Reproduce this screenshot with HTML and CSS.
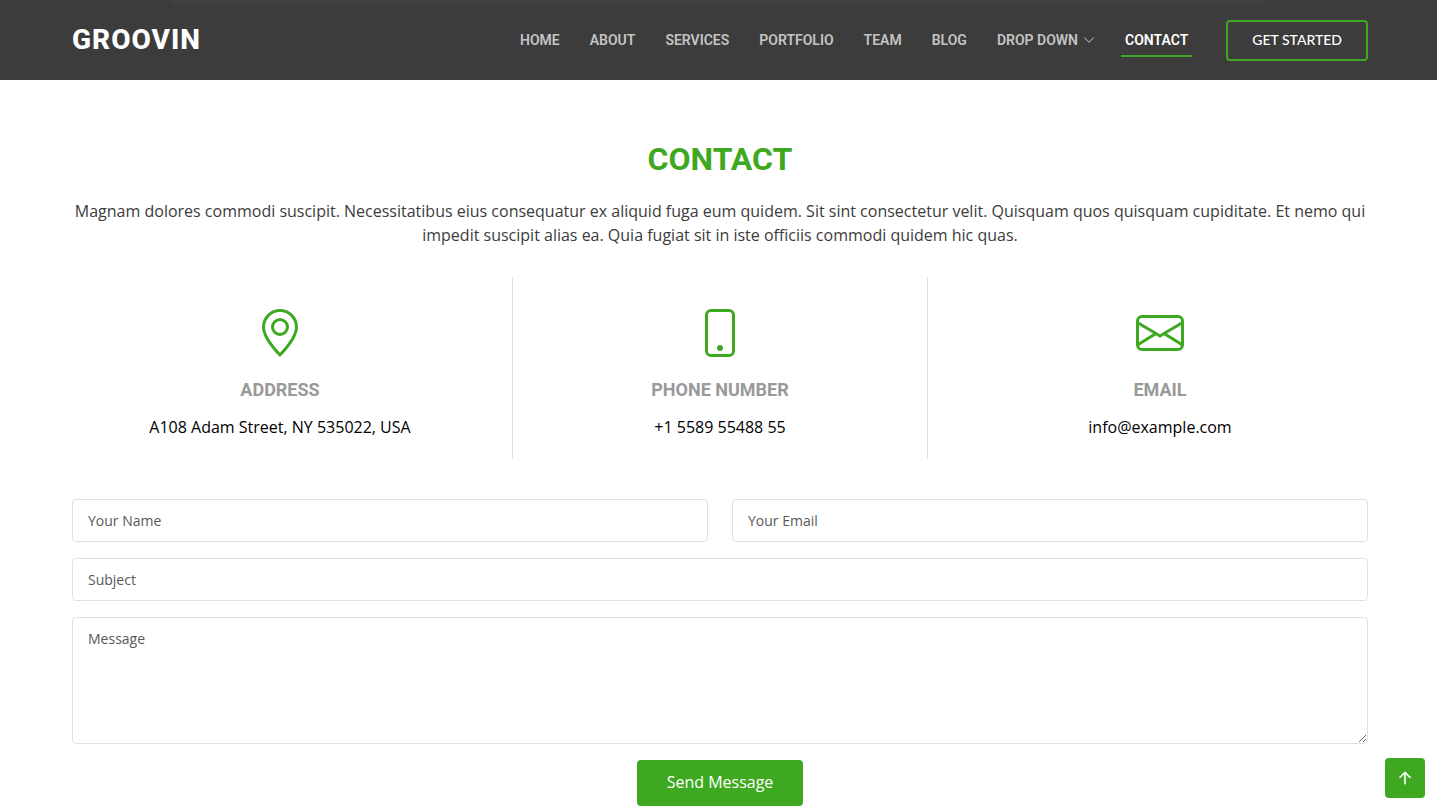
FILE: index.html
```
<!DOCTYPE html>
<html lang="en">
<head>
    <meta charset="UTF-8">
    <meta name="viewport" content="width=device-width, initial-scale=1.0">
    <title>Groovin - Contact</title>
    <link rel="stylesheet" href="styles.css">
</head>
<body>
    <header class="header">
        <div class="container header-row">
            <a class="logo" href="#">GROOVIN</a>
            <nav class="navbar">
                <a href="#">Home</a>
                <a href="#">About</a>
                <a href="#">Services</a>
                <a href="#">Portfolio</a>
                <a href="#">Team</a>
                <a href="#">Blog</a>
                <a href="#">Drop Down
                    <svg class="chevron" viewBox="0 0 16 16" fill="currentColor"><path fill-rule="evenodd" d="M1.646 4.646a.5.5 0 0 1 .708 0L8 10.293l5.646-5.647a.5.5 0 0 1 .708.708l-6 6a.5.5 0 0 1-.708 0l-6-6a.5.5 0 0 1 0-.708z"/></svg>
                </a>
                <a class="active" href="#contact">Contact</a>
            </nav>
            <a class="get-started" href="#">GET STARTED</a>
        </div>
    </header>

    <main>
        <section id="contact" class="contact">
            <div class="container">
                <div class="section-title">
                    <h2>Contact</h2>
                    <p>Magnam dolores commodi suscipit. Necessitatibus eius consequatur ex aliquid fuga eum quidem. Sit sint consectetur velit. Quisquam quos quisquam cupiditate. Et nemo qui impedit suscipit alias ea. Quia fugiat sit in iste officiis commodi quidem hic quas.</p>
                </div>

                <div class="contact-info">
                    <div class="info-box">
                        <svg viewBox="0 0 16 16" fill="currentColor"><path d="M12.166 8.94c-.524 1.062-1.234 2.12-1.96 3.07A31.493 31.493 0 0 1 8 14.58a31.481 31.481 0 0 1-2.206-2.57c-.726-.95-1.436-2.008-1.96-3.07C3.304 7.867 3 6.862 3 6a5 5 0 0 1 10 0c0 .862-.305 1.867-.834 2.94zM8 16s6-5.686 6-10A6 6 0 0 0 2 6c0 4.314 6 10 6 10z"/><path d="M8 8a2 2 0 1 1 0-4 2 2 0 0 1 0 4zm0 1a3 3 0 1 0 0-6 3 3 0 0 0 0 6z"/></svg>
                        <h3>Address</h3>
                        <address>A108 Adam Street, NY 535022, USA</address>
                    </div>
                    <div class="info-box info-phone">
                        <svg viewBox="0 0 16 16" fill="currentColor"><path d="M11 1a1 1 0 0 1 1 1v12a1 1 0 0 1-1 1H5a1 1 0 0 1-1-1V2a1 1 0 0 1 1-1h6zM5 0a2 2 0 0 0-2 2v12a2 2 0 0 0 2 2h6a2 2 0 0 0 2-2V2a2 2 0 0 0-2-2H5z"/><path d="M8 14a1 1 0 1 0 0-2 1 1 0 0 0 0 2z"/></svg>
                        <h3>Phone Number</h3>
                        <p><a href="tel:+155895548855">+1 5589 55488 55</a></p>
                    </div>
                    <div class="info-box">
                        <svg viewBox="0 0 16 16" fill="currentColor"><path d="M0 4a2 2 0 0 1 2-2h12a2 2 0 0 1 2 2v8a2 2 0 0 1-2 2H2a2 2 0 0 1-2-2V4zm2-1a1 1 0 0 0-1 1v.217l7 4.2 7-4.2V4a1 1 0 0 0-1-1H2zm13 2.383-4.708 2.825L15 11.105V5.383zm-.034 6.876-5.64-3.471L8 9.583l-1.326-.795-5.64 3.47A1 1 0 0 0 2 13h12a1 1 0 0 0 .966-.741zM1 11.105l4.708-2.897L1 5.383v5.722z"/></svg>
                        <h3>Email</h3>
                        <p><a href="mailto:info@example.com">info@example.com</a></p>
                    </div>
                </div>

                <form class="contact-form">
                    <div class="form-row">
                        <input type="text" name="name" placeholder="Your Name" aria-label="Your Name">
                        <input type="email" name="email" placeholder="Your Email" aria-label="Your Email">
                    </div>
                    <input type="text" name="subject" placeholder="Subject" aria-label="Subject">
                    <textarea name="message" rows="5" placeholder="Message" aria-label="Message"></textarea>
                    <button type="submit">Send Message</button>
                </form>
            </div>
        </section>
    </main>

    <a class="back-to-top" href="#" aria-label="Back to top">
        <svg viewBox="0 0 16 16" fill="currentColor"><path fill-rule="evenodd" stroke="currentColor" stroke-width=".4" d="M8 13a.5.5 0 0 0 .5-.5V4.707l3.146 3.147a.5.5 0 0 0 .708-.708l-4-4a.5.5 0 0 0-.708 0l-4 4a.5.5 0 1 0 .708.708L7.5 4.707V12.5A.5.5 0 0 0 8 13z"/></svg>
    </a>
</body>
</html>
```
FILE: styles.css
```
* {
    box-sizing: border-box;
}

body {
    margin: 0;
    background: #fff;
    color: #3c3c3c;
    font-family: "Open Sans", sans-serif;
    font-size: 16px;
    line-height: 24px;
}

a {
    color: inherit;
    text-decoration: none;
}

h2, h3, p {
    margin: 0;
}

.container {
    padding: 0 69px 0 72px;
}

/* Header */
.header {
    background: linear-gradient(#404040, #404040) 50% 0 / 76% 4px no-repeat #3c3c3c;
}

.header-row {
    display: flex;
    align-items: center;
    height: 80px;
}

.logo {
    margin-right: auto;
    color: #fff;
    font-family: Roboto, sans-serif;
    font-size: 28px;
    font-weight: 800;
    letter-spacing: 1px;
}

.navbar {
    display: flex;
    gap: 22px;
    margin-right: 34px;
    color: #c4c4c4;
    font-family: Roboto, sans-serif;
    font-size: 14px;
    font-weight: 600;
    text-transform: uppercase;
    white-space: nowrap;
}

.navbar a {
    display: flex;
    align-items: center;
    padding: 3px 4px;
    border-bottom: 2px solid transparent;
    border-top: 2px solid transparent;
}

.navbar .active {
    color: #fff;
    border-bottom-color: #3fa821;
}

.chevron {
    width: 12px;
    height: 12px;
    margin-left: 5px;
}

.get-started {
    padding: 6px 24px 8px;
    border: 2px solid #3fa821;
    border-radius: 4px;
    color: #fff;
    font-family: Lato, sans-serif;
    font-size: 14px;
    font-weight: 500;
    line-height: 23px;
    white-space: nowrap;
}

/* Contact */
.contact {
    padding-top: 60px;
}

.section-title {
    padding-bottom: 30px;
    text-align: center;
}

.section-title h2 {
    margin-bottom: 21px;
    color: #3fa821;
    font-family: Roboto, sans-serif;
    font-size: 32px;
    font-weight: 700;
    line-height: 38px;
    text-transform: uppercase;
}

.contact-info {
    display: grid;
    grid-template-columns: repeat(3, 1fr);
    gap: 24px;
    text-align: center;
}

.info-box {
    padding: 32px 0 20px;
    color: #000;
}

.info-phone {
    border-left: 1px solid #ddd;
    border-right: 1px solid #ddd;
}

.info-box svg {
    display: block;
    width: 48px;
    height: 48px;
    margin: 0 auto;
    color: #3fa821;
}

.info-box h3 {
    margin: 22px 0 14px;
    color: #999;
    font-family: Roboto, sans-serif;
    font-size: 18px;
    font-weight: 700;
    line-height: 22px;
    text-transform: uppercase;
}

.info-box address {
    font-style: normal;
}

/* Form */
.contact-form {
    display: flex;
    flex-direction: column;
    gap: 16px;
    margin-top: 40px;
}

.form-row {
    display: grid;
    grid-template-columns: 1fr 1fr;
    gap: 24px;
}

.contact-form input,
.contact-form textarea {
    display: block;
    width: 100%;
    padding: 10px 15px;
    border: 1px solid #dee2e6;
    border-radius: 4px;
    background: #fff;
    font-family: inherit;
    font-size: 14px;
    line-height: 21px;
}

.contact-form input {
    height: 43px;
}

.contact-form textarea {
    resize: vertical;
}

.contact-form ::placeholder {
    color: #595959;
}

.contact-form button {
    align-self: center;
    padding: 10px 30px 12px;
    border: 0;
    border-radius: 4px;
    background: #3fa821;
    color: #fff;
    font-family: inherit;
    font-size: 16px;
    line-height: 24px;
}

.back-to-top {
    position: fixed;
    right: 12px;
    bottom: 10px;
    display: flex;
    align-items: center;
    justify-content: center;
    width: 40px;
    height: 40px;
    border-radius: 4px;
    background: #3fa821;
    color: #fff;
}

.back-to-top svg {
    width: 20px;
    height: 20px;
}
```
